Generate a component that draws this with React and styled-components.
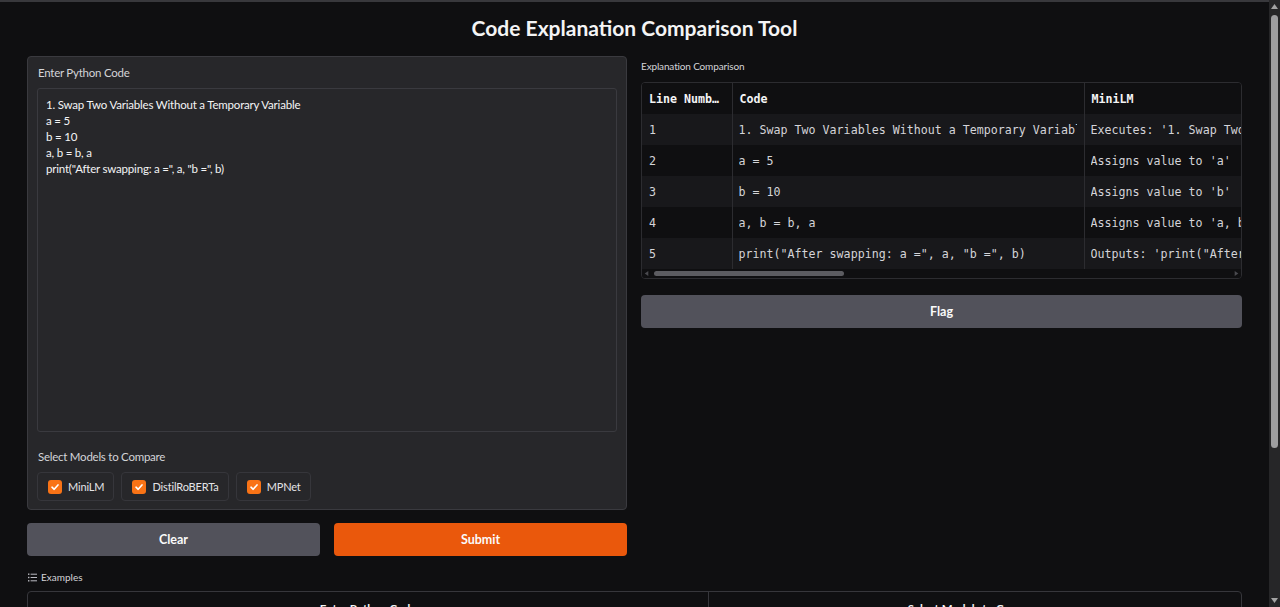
import React from "react";
import styled, { createGlobalStyle } from "styled-components";

const GlobalStyle = createGlobalStyle`
  html, body {
    margin: 0;
    height: 100%;
    overflow: hidden;
    background: #0f0f11;
  }
  body {
    color: #e4e4e7;
    font-family: Lato, "Open Sans", sans-serif;
  }
  * {
    box-sizing: border-box;
  }
`;

const codeLines = [
  "1. Swap Two Variables Without a Temporary Variable",
  "a = 5",
  "b = 10",
  "a, b = b, a",
  'print("After swapping: a =", a, "b =", b)',
];

const rows = [
  {
    n: 1,
    code: codeLines[0],
    mini: "Executes: '1. Swap Two Variables Without a Temporary Variable'",
    distil: "Executes: '1. Swap Two Variables Without a Temporary Variable'",
    mpnet: "Executes: '1. Swap Two Variables Without a Temporary Variable'",
  },
  { n: 2, code: codeLines[1], mini: "Assigns value to 'a'", distil: "Assigns value to 'a'", mpnet: "Assigns value to 'a'" },
  { n: 3, code: codeLines[2], mini: "Assigns value to 'b'", distil: "Assigns value to 'b'", mpnet: "Assigns value to 'b'" },
  { n: 4, code: codeLines[3], mini: "Assigns value to 'a, b'", distil: "Assigns value to 'a, b'", mpnet: "Assigns value to 'a, b'" },
  {
    n: 5,
    code: codeLines[4],
    mini: "Outputs: 'print(\"After swapping: a =\", a, \"b =\", b)'",
    distil: "Outputs: 'print(\"After swapping: a =\", a, \"b =\", b)'",
    mpnet: "Outputs: 'print(\"After swapping: a =\", a, \"b =\", b)'",
  },
];

const models = ["MiniLM", "DistilRoBERTa", "MPNet"];

const Check = () => (
  <CheckBox>
    <svg width="10" height="10" viewBox="0 0 10 10">
      <path d="M2 5.2 L4.2 7.3 L8 2.9" fill="none" stroke="#fff" strokeWidth="1.6" strokeLinecap="round" strokeLinejoin="round" />
    </svg>
  </CheckBox>
);

const ListIcon = () => (
  <svg width="9" height="9" viewBox="0 0 9 9">
    <g fill="#bbbbc2">
      <rect x="0" y="0.5" width="1.4" height="1.4" />
      <rect x="0" y="3.8" width="1.4" height="1.4" />
      <rect x="0" y="7.1" width="1.4" height="1.4" />
      <rect x="2.6" y="0.7" width="6.4" height="1" />
      <rect x="2.6" y="4" width="6.4" height="1" />
      <rect x="2.6" y="7.3" width="6.4" height="1" />
    </g>
  </svg>
);

const Arrow = ({ dir, color = "#a3a3a3", size = 7 }) => {
  const pts = {
    up: "0,6 3.5,1 7,6",
    down: "0,1 3.5,6 7,1",
    left: "6,0 1,3.5 6,7",
    right: "1,0 6,3.5 1,7",
  }[dir];
  return (
    <svg width={size} height={size} viewBox="0 0 7 7">
      <polygon points={pts} fill={color} />
    </svg>
  );
};

const App = () => {
  return (
    <>
      <GlobalStyle />
      <Shell>
        <Main>
          <Title>Code Explanation Comparison Tool</Title>
          <Columns>
            <LeftCol>
              <Block>
                <Label>Enter Python Code</Label>
                <CodeInput readOnly defaultValue={codeLines.join("\n")} />
                <Label $gap>Select Models to Compare</Label>
                <Choices>
                  {models.map((m) => (
                    <Choice key={m}>
                      <Check />
                      <span>{m}</span>
                    </Choice>
                  ))}
                </Choices>
              </Block>
              <ButtonRow>
                <Button>Clear</Button>
                <Button $primary>Submit</Button>
              </ButtonRow>
            </LeftCol>
            <RightCol>
              <SmallLabel>Explanation Comparison</SmallLabel>
              <TableFrame>
                <TableClip>
                  <Table>
                    <colgroup>
                      <col style={{ width: 90 }} />
                      <col style={{ width: 352 }} />
                      <col style={{ width: 465 }} />
                      <col style={{ width: 465 }} />
                      <col style={{ width: 465 }} />
                    </colgroup>
                    <thead>
                      <tr>
                        <Th>Line Number</Th>
                        <Th>Code</Th>
                        <Th>MiniLM</Th>
                        <Th>DistilRoBERTa</Th>
                        <Th>MPNet</Th>
                      </tr>
                    </thead>
                    <tbody>
                      {rows.map((r) => (
                        <Tr key={r.n} $odd={r.n % 2 === 1}>
                          {[r.n, r.code, r.mini, r.distil, r.mpnet].map((v, i) => (
                            <Td key={i}>
                              <CellText>{v}</CellText>
                            </Td>
                          ))}
                        </Tr>
                      ))}
                    </tbody>
                  </Table>
                </TableClip>
                <HScroll>
                  <Arrow dir="left" color="#4a4a4f" size={5} />
                  <HTrack>
                    <HThumb />
                  </HTrack>
                  <Arrow dir="right" color="#4a4a4f" size={5} />
                </HScroll>
              </TableFrame>
              <FlagButton>Flag</FlagButton>
            </RightCol>
          </Columns>
          <ExamplesLabel>
            <ListIcon />
            <span>Examples</span>
          </ExamplesLabel>
          <Examples>
            <ExHead>
              <ExCell $first>Enter Python Code</ExCell>
              <ExCell>Select Models to Compare</ExCell>
            </ExHead>
            <ExRow>
              <ExValue $first>1. Swap Two Variables Without a Temporary Variable...</ExValue>
              <ExValue>MiniLM, DistilRoBERTa, MPNet</ExValue>
            </ExRow>
          </Examples>
        </Main>
        <VScroll>
          <Arrow dir="up" />
          <VTrack>
            <VThumb />
          </VTrack>
          <Arrow dir="down" />
        </VScroll>
      </Shell>
    </>
  );
};

export default App;

const Shell = styled.div`
  display: flex;
  height: 100vh;
  overflow: hidden;
`;

const Main = styled.div`
  flex: 1;
  min-width: 0;
  overflow: hidden;
  border-top: 2px solid #38383c;
  padding: 0 27px 0 27px;
`;

const VScroll = styled.div`
  width: 11px;
  flex: none;
  background: #262628;
  display: flex;
  flex-direction: column;
  align-items: center;
  padding: 3px 0 3px;
  gap: 2px;
`;

const VTrack = styled.div`
  flex: 1;
  width: 100%;
  padding: 3px 2px 0;
`;

const VThumb = styled.div`
  height: 433px;
  width: 100%;
  background: #9d9d9f;
  border-radius: 4px;
`;

const Title = styled.h1`
  margin: 0 0 2px;
  height: 51px;
  display: flex;
  align-items: center;
  justify-content: center;
  font-size: 21px;
  font-weight: 700;
  color: #f4f4f5;
  padding-bottom: 1px;
  box-sizing: content-box;
`;

const Columns = styled.div`
  display: grid;
  grid-template-columns: 600px 601px;
  gap: 14px;
  align-items: start;
`;

const LeftCol = styled.div`
  display: flex;
  flex-direction: column;
  gap: 13px;
`;

const Block = styled.div`
  background: #27272a;
  border: 1px solid #3a3a3f;
  border-radius: 4px;
  padding: 8px 9px 8px 9px;
  display: flex;
  flex-direction: column;
  height: 454px;
`;

const Label = styled.div`
  font-size: 11.5px;
  letter-spacing: -0.25px;
  color: #d4d4d8;
  line-height: 16px;
  padding-left: 1px;
  margin-top: ${(p) => (p.$gap ? "17px" : "0")};
  margin-bottom: 7px;
`;

const CodeInput = styled.textarea`
  display: block;
  width: 100%;
  height: 344px;
  resize: none;
  background: #27272a;
  border: 1px solid #3a3a3f;
  border-radius: 3px;
  color: #f4f4f5;
  font-family: Lato, "Open Sans", sans-serif;
  font-size: 11.5px;
  letter-spacing: -0.2px;
  line-height: 16px;
  padding: 8px 8px;
  outline: none;
`;

const Choices = styled.div`
  display: flex;
  gap: 7px;
`;

const Choice = styled.label`
  display: flex;
  align-items: center;
  gap: 6px;
  height: 29px;
  padding: 0 9px 0 10px;
  border: 1px solid #36363b;
  border-radius: 4px;
  background: #27272a;
  font-size: 11px;
  letter-spacing: -0.15px;
  color: #e4e4e7;
`;

const CheckBox = styled.span`
  width: 14px;
  height: 14px;
  border-radius: 3px;
  background: #f97316;
  display: flex;
  align-items: center;
  justify-content: center;
`;

const ButtonRow = styled.div`
  display: grid;
  grid-template-columns: 293px 293px;
  justify-content: space-between;
`;

const Button = styled.button`
  height: 33px;
  border: none;
  border-radius: 4px;
  background: ${(p) => (p.$primary ? "#ea580c" : "#52525b")};
  color: #fafafa;
  font-family: Lato, "Open Sans", sans-serif;
  font-weight: 700;
  font-size: 12.5px;
`;

const RightCol = styled.div`
  display: flex;
  flex-direction: column;
`;

const SmallLabel = styled.div`
  font-size: 10px;
  letter-spacing: -0.15px;
  color: #d4d4d8;
  line-height: 14px;
  margin-top: 3px;
  margin-bottom: 9px;
`;

const TableFrame = styled.div`
  border: 1px solid #2c2c30;
  border-radius: 4px;
  overflow: hidden;
`;

const TableClip = styled.div`
  overflow: hidden;
`;

const HScroll = styled.div`
  height: 9px;
  display: flex;
  align-items: center;
  gap: 3px;
  padding: 0 2px;
  background: #0f0f11;
`;

const HTrack = styled.div`
  flex: 1;
  display: flex;
  align-items: center;
`;

const HThumb = styled.div`
  width: 190px;
  height: 5px;
  margin-left: 2px;
  border-radius: 3px;
  background: #5c5c61;
`;

const Table = styled.table`
  border-collapse: collapse;
  table-layout: fixed;
  width: 1837px;
  font-family: "DejaVu Sans Mono", "Liberation Mono", monospace;
  font-size: 11.65px;
`;

const Th = styled.th`
  height: 31px;
  text-align: left;
  padding: 0 11px 0 7px;
  font-weight: 700;
  color: #f4f4f5;
  background: #0f0f11;
  border-left: 1px solid #2c2c30;
  white-space: nowrap;
  overflow: hidden;
  text-overflow: ellipsis;
  &:first-child {
    border-left: none;
  }
`;

const Tr = styled.tr`
  background: ${(p) => (p.$odd ? "#18181b" : "#0f0f11")};
`;

const Td = styled.td`
  height: 31px;
  padding: 0 7px 0 6px;
  color: #d4d4d8;
  border-left: 1px solid #2c2c30;
  &:first-child {
    border-left: none;
    padding-left: 7px;
  }
`;

const CellText = styled.div`
  white-space: nowrap;
  overflow: hidden;
`;

const FlagButton = styled.button`
  margin-top: 16px;
  height: 33px;
  border: none;
  border-radius: 4px;
  background: #52525b;
  color: #fafafa;
  font-family: Lato, "Open Sans", sans-serif;
  font-weight: 700;
  font-size: 12.5px;
`;

const ExamplesLabel = styled.div`
  display: flex;
  align-items: center;
  gap: 4px;
  margin-top: 14px;
  margin-left: 1px;
  height: 14px;
  font-size: 10px;
  color: #d4d4d8;
`;

const Examples = styled.div`
  margin-top: 7px;
  border: 1px solid #36363b;
  border-radius: 4px;
  overflow: hidden;
`;

const ExHead = styled.div`
  display: grid;
  grid-template-columns: 680px 1fr;
`;

const ExCell = styled.div`
  height: 32px;
  display: flex;
  align-items: flex-start;
  justify-content: center;
  padding-top: 10px;
  font-size: 11.5px;
  font-weight: 700;
  color: #f4f4f5;
  border-left: ${(p) => (p.$first ? "none" : "1px solid #36363b")};
`;

const ExRow = styled.div`
  display: grid;
  grid-template-columns: 680px 1fr;
  border-top: 1px solid #36363b;
`;

const ExValue = styled.div`
  height: 36px;
  display: flex;
  align-items: center;
  padding: 0 10px;
  font-size: 11.5px;
  color: #d4d4d8;
  border-left: ${(p) => (p.$first ? "none" : "1px solid #36363b")};
`;
